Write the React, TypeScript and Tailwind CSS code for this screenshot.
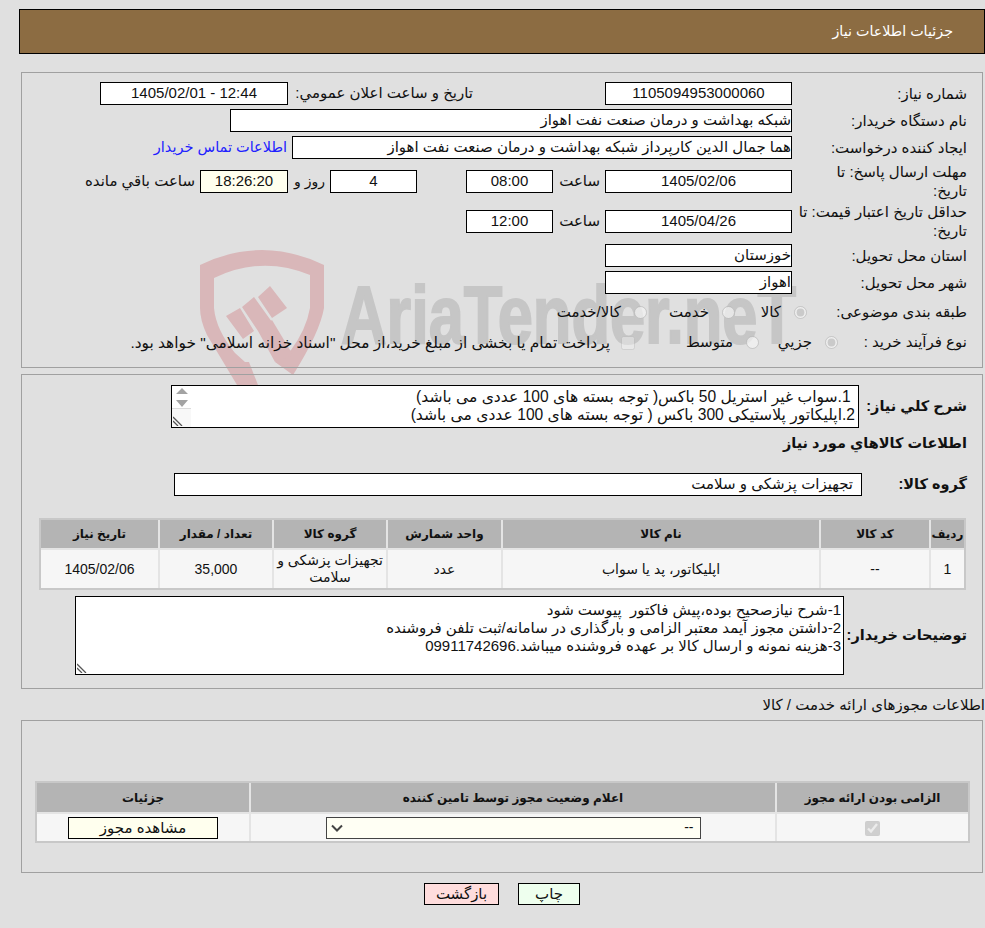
const inputBox = "h-[23px] border border-black bg-white flex items-center shrink-0 overflow-hidden";

function Box({ w, children, center, cream }: { w: string; children: React.ReactNode; center?: boolean; cream?: boolean }) {
  return (
    <div className={`${inputBox} ${w} ${center ? "justify-center" : "justify-start"} ${cream ? "!bg-[#ffffee]" : ""}`}>{children}</div>
  );
}

function Label({ children }: { children: React.ReactNode }) {
  return <div className="w-[175px] shrink-0 leading-[19px]">{children}</div>;
}

function Radio({ checked, label, w, square }: { checked?: boolean; label: React.ReactNode; w: string; square?: boolean }) {
  return (
    <div className={`flex items-center shrink-0 ${w}`}>
      {square ? (
        <input type="checkbox" disabled className="m-0 w-[14px] h-[14px] ml-[11px] opacity-60" />
      ) : (
        <input type="radio" disabled defaultChecked={checked} className="m-0 w-[13px] h-[13px] ml-[13px]" />
      )}
      <span className="whitespace-nowrap">{label}</span>
    </div>
  );
}

function Watermark() {
  return (
    <svg dir="ltr" className="absolute left-[190px] top-[240px] pointer-events-none" width="620" height="190" viewBox="0 0 620 190">
      <path fill="#d9b7b9" d="M47 145 L17 95 Q10 80 10 68 L10 25 Q72 -5 134 25 L134 68 Q130 92 103 135 L85 122 L101 110 Q116 90 120 68 L120 35 Q72 15 24 38 L24 68 Q26 90 45 113 L55 122 L59 122 L68 145 Z" />
      <path fill="#d9b7b9" d="M36 76 L50 68 L64 91 L53 99 Z M52 67 L64 57 L82 82 L68 91 Z M68 57 L80 46 L97 68 L82 78 Z M68 91 L82 80 L103 115 L85 122 Z" />
      <text x="151" y="103" direction="ltr" fontFamily="'Liberation Sans', sans-serif" fontWeight="700" fontSize="82" fill="#c6c6c6" stroke="#c6c6c6" strokeWidth="2" textLength="455" lengthAdjust="spacingAndGlyphs">AriaTender.neT</text>
    </svg>
  );
}

function Scrollbar() {
  return (
    <div className="w-[19px] shrink-0 self-stretch flex flex-col items-center">
      <svg width="12" height="20" viewBox="0 0 12 20" className="mt-[2px]">
        <path d="M6 0 L12 6 H0 Z M0 12 H12 L6 19 Z" fill="#a3a3a3" />
      </svg>
      <div className="w-full border-t border-[#dcdcdc] bg-[#f8f8f8] mt-auto h-[19px] relative">
        <ResizeGrip />
      </div>
    </div>
  );
}

function ResizeGrip() {
  return (
    <svg width="10" height="10" viewBox="0 0 10 10" className="absolute left-[1px] bottom-[1px]">
      <path d="M0 1 L9 10 M0 5 L5 10" stroke="#555" strokeWidth="1.3" fill="none" />
    </svg>
  );
}

const th = "bg-[#b4b4b4] font-bold text-[12px] text-center align-middle p-0 border-l-2 border-b-2 border-[#e4e4e4] last:border-l-0";
const td = "bg-[#f6f6f6] text-center align-middle p-0 text-[14px] leading-[17px] border-l-2 border-[#e4e4e4] last:border-l-0";
const boldLabel = "shrink-0 font-bold text-[14.5px] whitespace-nowrap";

export default function App() {
  return (
    <div dir="rtl" className="relative w-[985px] h-[928px] overflow-hidden bg-[#e0e0e0] text-[15px] text-[#111] font-['Liberation_Sans','DejaVu_Sans',sans-serif]">
      <Watermark />

      <div className="relative pt-[9px] pl-[19px]">
        <div className="h-[45px] bg-[#8c6c42] border border-black flex items-center pr-[31px] text-white text-[14.3px]">جزئیات اطلاعات نیاز</div>
      </div>

      <div className="relative mt-[18px] ml-[21px] mr-[2px] h-[296px] border border-[#a0a0a0] pr-[15px] pt-[9px]">
        <div className="flex items-center h-[23px]">
          <Label>شماره نیاز:</Label>
          <Box w="w-[187px]" center>1105094953000060</Box>
          <div className="w-[132px] shrink-0" />
          <div className="w-[185px] shrink-0 whitespace-nowrap">تاریخ و ساعت اعلان عمومي:</div>
          <Box w="w-[188px]" center><span dir="ltr">1405/02/01 - 12:44</span></Box>
        </div>
        <div className="flex items-center h-[23px] mt-[4px]">
          <Label>نام دستگاه خریدار:</Label>
          <Box w="w-[562px]">شبکه بهداشت و درمان صنعت نفت اهواز</Box>
        </div>
        <div className="flex items-center h-[23px] mt-[4px]">
          <Label>ایجاد کننده درخواست:</Label>
          <Box w="w-[500px]">هما جمال الدین کارپرداز شبکه بهداشت و درمان صنعت نفت اهواز</Box>
          <a className="text-[#2020ff] text-[14.5px] mr-[5px] whitespace-nowrap">اطلاعات تماس خریدار</a>
        </div>
        <div className="flex items-center h-[38px] mt-[3px]">
          <Label>مهلت ارسال پاسخ: تا<br />تاریخ:</Label>
          <Box w="w-[187px]" center>1405/02/06</Box>
          <div className="w-[52px] shrink-0 pr-[5px]">ساعت</div>
          <Box w="w-[87px]" center>08:00</Box>
          <div className="w-[49px] shrink-0" />
          <Box w="w-[87px]" center>4</Box>
          <div className="w-[42px] shrink-0 pr-[5px] whitespace-nowrap text-[14px]">روز و</div>
          <Box w="w-[88px]" center cream>18:26:20</Box>
          <div className="pr-[5px] whitespace-nowrap">ساعت باقي مانده</div>
        </div>
        <div className="flex items-center h-[38px] mt-[2px]">
          <Label>حداقل تاریخ اعتبار قیمت: تا<br />تاریخ:</Label>
          <Box w="w-[187px]" center>1405/04/26</Box>
          <div className="w-[52px] shrink-0 pr-[5px]">ساعت</div>
          <Box w="w-[87px]" center>12:00</Box>
        </div>
        <div className="flex items-center h-[23px] mt-[4px]">
          <Label>استان محل تحویل:</Label>
          <Box w="w-[187px]">خوزستان</Box>
        </div>
        <div className="flex items-center h-[23px] mt-[4px]">
          <Label>شهر محل تحویل:</Label>
          <Box w="w-[187px]">اهواز</Box>
        </div>
        <div className="flex items-center h-[23px] mt-[7px]">
          <div className="w-[160px] shrink-0">طبقه بندی موضوعی:</div>
          <Radio checked label="کالا" w="w-[72px]" />
          <Radio label="خدمت" w="w-[88px]" />
          <Radio label="کالا/خدمت" w="w-[100px]" />
        </div>
        <div className="flex items-center h-[23px] mt-[7px]">
          <div className="w-[129px] shrink-0">نوع فرآیند خرید :</div>
          <Radio checked label="جزيي" w="w-[79px]" />
          <Radio label="متوسط" w="w-[124px]" />
          <Radio square label={<span className="text-[15.4px]">{`پرداخت تمام یا بخشی از مبلغ خرید،از محل "اسناد خزانه اسلامی" خواهد بود.`}</span>} w="w-[510px]" />
        </div>
      </div>

      <div className="relative mt-[6px] ml-[21px] mr-[2px] h-[315px] border border-[#a0a0a0] pr-[15px] pt-[10px]">
        <div className="flex items-center h-[43px]">
          <div className={`w-[108px] ${boldLabel}`}>شرح كلي نياز:</div>
          <div className="w-[688px] h-[43px] border border-black bg-white flex leading-[18px] text-[15.6px]">
            <div className="flex-1 pr-[3px] pt-[2px] whitespace-pre">
              <div>{" 1.سواب غیر استریل 50 باکس( توجه بسته های 100 عددی می باشد)"}</div>
              <div>2.اپلیکاتور پلاستیکی 300 باکس ( توجه بسته های 100 عددی می باشد)</div>
            </div>
            <Scrollbar />
          </div>
        </div>
        <div className="font-bold text-[14.5px] mt-[5px] h-[20px] leading-[20px]">اطلاعات کالاهاي مورد نياز</div>
        <div className="flex items-center h-[23px] mt-[20px]">
          <div className={`w-[105px] ${boldLabel}`}>گروه کالا:</div>
          <div className="w-[688px] h-[23px] border border-black bg-white flex items-center pr-[8px]">تجهیزات پزشکی و سلامت</div>
        </div>

        <table className="mt-[22px] mr-[1px] w-[927px] border-separate border-spacing-0 border-2 border-[#c8c8c8] table-fixed">
          <colgroup>
            <col className="w-[35px]" />
            <col className="w-[110px]" />
            <col className="w-[318px]" />
            <col className="w-[115px]" />
            <col className="w-[114px]" />
            <col className="w-[114px]" />
            <col className="w-[117px]" />
          </colgroup>
          <thead>
            <tr className="h-[30px]">
              {["ردیف", "کد کالا", "نام کالا", "واحد شمارش", "گروه کالا", "تعداد / مقدار", "تاریخ نیاز"].map((t) => (
                <th key={t} className={th}>{t}</th>
              ))}
            </tr>
          </thead>
          <tbody>
            <tr className="h-[38px]">
              <td className={td}>1</td>
              <td className={td}>--</td>
              <td className={td}>اپلیکاتور، پد یا سواب</td>
              <td className={td}>عدد</td>
              <td className={td}>تجهیزات پزشکی و سلامت</td>
              <td className={td}>35,000</td>
              <td className={td}>1405/02/06</td>
            </tr>
          </tbody>
        </table>

        <div className="flex items-center mt-[6px] h-[79px]">
          <div className={`w-[123px] ${boldLabel}`}>توضیحات خریدار:</div>
          <div className="relative w-[769px] h-[79px] border border-black bg-white pr-[2px] pt-[4px] leading-[18px] whitespace-pre">
            <div>1-شرح نیازصحیح بوده،پیش فاکتور  پیوست شود</div>
            <div>2-داشتن مجوز آیمد معتبر الزامی و بارگذاری در سامانه/ثبت تلفن فروشنده</div>
            <div>3-هزینه نمونه و ارسال کالا بر عهده فروشنده میباشد.09911742696</div>
            <ResizeGrip />
          </div>
        </div>
      </div>

      <div className="relative h-[20px] leading-[20px] mt-[6px]">اطلاعات مجوزهای ارائه خدمت / کالا</div>

      <div className="relative mt-[5px] ml-[21px] mr-[2px] h-[153px] border border-[#a0a0a0] pt-[60px]">
        <table className="mr-[12px] w-[935px] border-separate border-spacing-0 border-2 border-[#c8c8c8] table-fixed">
          <colgroup>
            <col className="w-[193px]" />
            <col className="w-[526px]" />
            <col className="w-[212px]" />
          </colgroup>
          <thead>
            <tr className="h-[31px]">
              <th className={th}>الزامی بودن ارائه مجوز</th>
              <th className={th}>اعلام وضعیت مجوز توسط تامین کننده</th>
              <th className={th}>جزئیات</th>
            </tr>
          </thead>
          <tbody>
            <tr className="h-[27px]">
              <td className={td}>
                <input type="checkbox" checked disabled readOnly className="m-0 w-[15px] h-[15px] align-middle" />
              </td>
              <td className={td}>
                <div className="mx-auto w-[375px] h-[22px] border border-[#444] bg-[#fffff4] flex items-center justify-between pr-[6px] pl-[4px]">
                  <span>--</span>
                  <svg width="12" height="12" viewBox="0 0 12 12">
                    <path d="M1 3.5 L6 8.5 L11 3.5" stroke="#444" strokeWidth="2" fill="none" />
                  </svg>
                </div>
              </td>
              <td className={td}>
                <div className="mx-auto w-[150px] h-[22px] border border-black bg-[#ffffee] text-[15px] flex items-center justify-center">مشاهده مجوز</div>
              </td>
            </tr>
          </tbody>
        </table>
      </div>

      <div className="relative mt-[10px] flex justify-center gap-[19px] pl-[19px]">
        <div className="w-[62px] h-[22px] border border-black bg-[#eeffee] flex items-center justify-center">چاپ</div>
        <div className="w-[75px] h-[22px] border border-black bg-[#ffdddd] flex items-center justify-center">بازگشت</div>
      </div>
    </div>
  );
}
